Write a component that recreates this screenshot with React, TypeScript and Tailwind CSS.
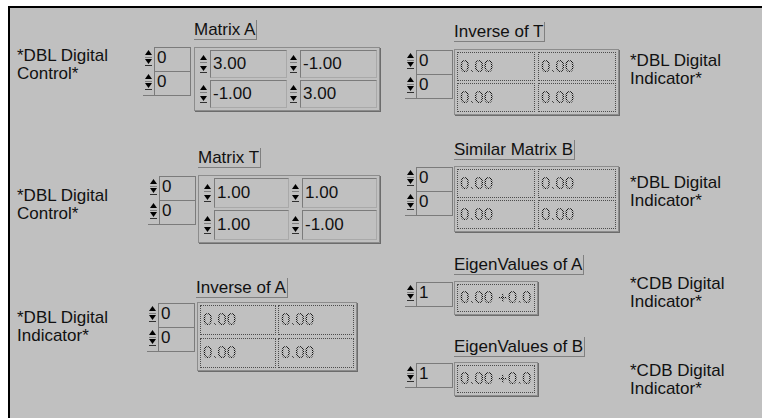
import * as React from "react";

const cx = (...c: Array<string | false | null | undefined>) => c.filter(Boolean).join(" ");

// dithered look of greyed-out indicator digits
const dots =
  "inline-block whitespace-nowrap bg-[image:repeating-conic-gradient(#111_0_25%,transparent_0_50%)] bg-[length:2px_2px] bg-clip-text text-transparent";

/* ------------------------------ small pieces ------------------------------ */

function IndexSpin() {
  return (
    <svg width="11" height="24" viewBox="0 0 11 24" className="shrink-0">
      <polygon points="5.5,3 9,8 2,8" fill="#000" />
      <rect x="2" y="10" width="7" height="1" fill="#808080" />
      <polygon points="2,12 9,12 5.5,17" fill="#000" />
      <rect x="2" y="18" width="7" height="1" fill="#303030" />
    </svg>
  );
}

function CellSpin() {
  return (
    <div className="w-[13px] shrink-0 flex items-center justify-center">
      <svg width="13" height="22" viewBox="0 0 13 22">
        <polygon points="6.5,2 10,7 3,7" fill="#000" />
        <rect x="3" y="9" width="7" height="1" fill="#808080" />
        <polygon points="3,13 10,13 6.5,18" fill="#000" />
        <rect x="3" y="19" width="7" height="1" fill="#303030" />
      </svg>
    </div>
  );
}

function Caption({ lines, className }: { lines: string[]; className?: string }) {
  return (
    <div className={cx("shrink-0 text-[17px] leading-[18px] text-[#111]", className)}>
      {lines.map((l) => (
        <div key={l}>{l}</div>
      ))}
    </div>
  );
}

function Label({ text }: { text: string }) {
  return (
    <div className="w-max h-[20px] border-r border-b border-[#808080] pr-[1px] leading-[19px] text-[17px] text-[#111]">
      {text}
    </div>
  );
}

function IndexGroup({ rows, value = "0", className }: { rows: number; value?: string; className?: string }) {
  return (
    <div className={cx("shrink-0 flex flex-col border-r border-b border-[#7b7b7b]", className)}>
      {Array.from({ length: rows }).map((_, i) => (
        <div key={i} className="flex h-[24px]">
          <IndexSpin />
          <div className="w-[36px] border-t border-l border-[#7b7b7b] pl-[2px] text-[17px] leading-[19px] text-[#111]">
            {value}
          </div>
        </div>
      ))}
    </div>
  );
}

function ControlGrid({
  values,
  fieldCls,
  className,
}: {
  values: string[];
  fieldCls: string;
  className?: string;
}) {
  return (
    <div
      className={cx(
        "grid grid-cols-2 gap-y-[2px] p-[2px] border border-[#8c8c8c] shadow-[1px_1px_0_#6c6c6c]",
        className
      )}
    >
      {values.map((v, i) => (
        <div key={i} className="flex">
          <CellSpin />
          <div
            className={cx(
              "flex items-center pl-[2px] text-[17px] text-[#111] border border-[#7b7b7b] border-r-[#a9a9a9] border-b-[#a9a9a9]",
              fieldCls
            )}
          >
            {v}
          </div>
        </div>
      ))}
    </div>
  );
}

function IndicatorGrid({
  values,
  cols = 2,
  cellCls,
  className,
}: {
  values: string[];
  cols?: number;
  cellCls: string;
  className?: string;
}) {
  return (
    <div
      className={cx(
        "grid p-[2px] border border-[#8c8c8c] shadow-[1px_1px_0_#6c6c6c]",
        cols === 2 ? "grid-cols-2" : "grid-cols-1",
        className
      )}
    >
      {values.map((v, i) => (
        <div
          key={i}
          className={cx(
            "flex items-center overflow-hidden pl-[2px] text-[17px] border border-dotted border-[#4c4c4c]",
            cellCls
          )}
        >
          <span className={dots}>{v}</span>
        </div>
      ))}
    </div>
  );
}

/* --------------------------------- panel --------------------------------- */

export default function App() {
  return (
    <div className="w-[762px] h-[418px] overflow-hidden bg-white pl-[8px] pt-[6px] font-['Liberation_Sans',Arial,sans-serif] text-black">
      <div className="h-full flex border-t-2 border-l-2 border-black bg-[#c0c0c0]">
        {/* left column */}
        <div className="w-[388px] shrink-0 flex flex-col">
          <div className="flex items-start h-[132px] shrink-0">
            <Caption className="ml-[7px] mt-[39px] w-[126px]" lines={["*DBL Digital", "Control*"]} />
            <IndexGroup rows={2} className="mt-[39px]" />
            <div className="ml-[3px] mt-[12px] flex flex-col items-start">
              <Label text="Matrix A" />
              <ControlGrid
                className="mt-[7px]"
                fieldCls="w-[77px] h-[28px]"
                values={["3.00", "-1.00", "-1.00", "3.00"]}
              />
            </div>
          </div>

          <div className="flex items-start h-[130px] shrink-0">
            <Caption className="ml-[7px] mt-[47px] w-[131px]" lines={["*DBL Digital", "Control*"]} />
            <IndexGroup rows={2} className="mt-[36px]" />
            <div className="ml-[2px] mt-[8px] flex flex-col items-start">
              <Label text="Matrix T" />
              <ControlGrid
                className="mt-[7px]"
                fieldCls="w-[75px] h-[30px]"
                values={["1.00", "1.00", "1.00", "-1.00"]}
              />
            </div>
          </div>

          <div className="flex items-start flex-1">
            <Caption className="ml-[7px] mt-[39px] w-[130px]" lines={["*DBL Digital", "Indicator*"]} />
            <IndexGroup rows={2} className="mt-[33px]" />
            <div className="ml-[1px] mt-[8px] flex flex-col items-start">
              <Label text="Inverse of A" />
              <IndicatorGrid
                className="mt-[4px] ml-[1px] gap-x-[2px] gap-y-[3px]"
                cellCls="w-[76px] h-[30px]"
                values={["0.00", "0.00", "0.00", "0.00"]}
              />
            </div>
          </div>
        </div>

        {/* right column */}
        <div className="flex-1 flex flex-col">
          <div className="flex items-start h-[122px] shrink-0">
            <IndexGroup rows={2} className="ml-[7px] mt-[42px]" />
            <div className="ml-[1px] mt-[14px] w-[176px] shrink-0 flex flex-col items-start">
              <Label text="Inverse of T" />
              <IndicatorGrid
                className="mt-[7px] gap-x-[3px] gap-y-[2px]"
                cellCls="w-[78px] h-[29px]"
                values={["0.00", "0.00", "0.00", "0.00"]}
              />
            </div>
            <Caption className="mt-[44px]" lines={["*DBL Digital", "Indicator*"]} />
          </div>

          <div className="flex items-start h-[115px] shrink-0">
            <IndexGroup rows={2} className="ml-[7px] mt-[37px]" />
            <div className="ml-[1px] mt-[10px] w-[176px] shrink-0 flex flex-col items-start">
              <Label text="Similar Matrix B" />
              <IndicatorGrid
                className="mt-[6px] gap-x-[3px] gap-y-[2px]"
                cellCls="w-[78px] h-[29px]"
                values={["0.00", "0.00", "0.00", "0.00"]}
              />
            </div>
            <Caption className="mt-[44px]" lines={["*DBL Digital", "Indicator*"]} />
          </div>

          <div className="flex items-start h-[82px] shrink-0">
            <IndexGroup rows={1} value="1" className="ml-[7px] mt-[37px]" />
            <div className="ml-[1px] mt-[10px] w-[176px] shrink-0 flex flex-col items-start">
              <Label text="EigenValues of A" />
              <IndicatorGrid
                cols={1}
                className="mt-[6px]"
                cellCls="w-[78px] h-[28px]"
                values={["0.00 +0.0"]}
              />
            </div>
            <Caption className="mt-[30px]" lines={["*CDB Digital", "Indicator*"]} />
          </div>

          <div className="flex items-start flex-1">
            <IndexGroup rows={1} value="1" className="ml-[7px] mt-[36px]" />
            <div className="ml-[1px] mt-[10px] w-[176px] shrink-0 flex flex-col items-start">
              <Label text="EigenValues of B" />
              <IndicatorGrid
                cols={1}
                className="mt-[5px]"
                cellCls="w-[78px] h-[28px]"
                values={["0.00 +0.0"]}
              />
            </div>
            <Caption className="mt-[35px]" lines={["*CDB Digital", "Indicator*"]} />
          </div>
        </div>
      </div>
    </div>
  );
}
